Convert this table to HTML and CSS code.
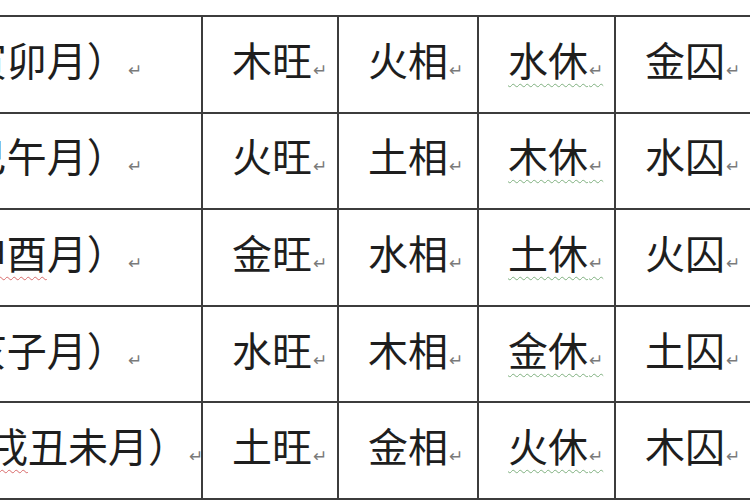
FILE: index.html
```html
<!DOCTYPE html>
<html lang="zh">
<head>
<meta charset="utf-8">
<title>旺相休囚死</title>
<link rel="stylesheet" href="styles.css">
</head>
<body>
<div class="page">
  <table class="wx">
    <colgroup>
      <col class="c-season">
      <col class="c-a">
      <col class="c-b">
      <col class="c-c">
      <col class="c-d">
      <col class="c-e">
    </colgroup>
    <tbody>
      <tr>
        <td class="season">春（寅卯月）<span class="pm">↵</span></td>
        <td>木旺<span class="pm">↵</span></td>
        <td>火相<span class="pm">↵</span></td>
        <td><span class="gram">水休<span class="pm">↵</span></span></td>
        <td>金囚<span class="pm">↵</span></td>
        <td>土死<span class="pm">↵</span></td>
      </tr>
      <tr>
        <td class="season">夏（巳午月）<span class="pm">↵</span></td>
        <td>火旺<span class="pm">↵</span></td>
        <td>土相<span class="pm">↵</span></td>
        <td><span class="gram">木休<span class="pm">↵</span></span></td>
        <td>水囚<span class="pm">↵</span></td>
        <td>金死<span class="pm">↵</span></td>
      </tr>
      <tr>
        <td class="season">秋（<span class="spell">申酉</span>月）<span class="pm">↵</span></td>
        <td>金旺<span class="pm">↵</span></td>
        <td>水相<span class="pm">↵</span></td>
        <td><span class="gram">土休<span class="pm">↵</span></span></td>
        <td>火囚<span class="pm">↵</span></td>
        <td>木死<span class="pm">↵</span></td>
      </tr>
      <tr>
        <td class="season">冬（亥子月）<span class="pm">↵</span></td>
        <td>水旺<span class="pm">↵</span></td>
        <td>木相<span class="pm">↵</span></td>
        <td><span class="gram">金休<span class="pm">↵</span></span></td>
        <td>土囚<span class="pm">↵</span></td>
        <td>火死<span class="pm">↵</span></td>
      </tr>
      <tr>
        <td class="season">四季（<span class="spell">辰戌</span>丑未月）<span class="pm">↵</span></td>
        <td>土旺<span class="pm">↵</span></td>
        <td>金相<span class="pm">↵</span></td>
        <td><span class="gram">火休<span class="pm">↵</span></span></td>
        <td>木囚<span class="pm">↵</span></td>
        <td>水死<span class="pm">↵</span></td>
      </tr>
    </tbody>
  </table>
</div>
</body>
</html>
```

FILE: styles.css
```css
html, body {
  margin: 0;
  padding: 0;
  background: #ffffff;
}

body {
  width: 750px;
  height: 500px;
  overflow: hidden;
  font-family: "Noto Sans CJK SC", "Noto Sans CJK JP", sans-serif;
  color: #1e1e1e;
}

.page {
  padding-top: 15px;
}

.wx {
  margin-left: -174px;
  border-collapse: collapse;
  table-layout: fixed;
  width: 1065px;
}

.c-season { width: 375px; }
.c-a { width: 136px; }
.c-b { width: 140px; }
.c-c { width: 137px; }
.c-d { width: 137px; }
.c-e { width: 140px; }

.wx tr {
  height: 96.6px;
}

.wx td {
  border: 2px solid #3c3c3c;
  padding: 0 0 0 29px;
  font-size: 40px;
  line-height: 48px;
  vertical-align: middle;
  text-align: left;
  white-space: nowrap;
  overflow: hidden;
}

.wx td.season {
  padding: 0;
  text-align: center;
}

.pm {
  font-family: "DejaVu Sans", sans-serif;
  font-size: 17px;
  color: #7a7a7a;
  margin-left: 1px;
}

.gram {
  text-decoration: underline wavy #7fb07f;
  text-decoration-thickness: 1px;
  text-underline-offset: 7px;
}

.spell {
  text-decoration: underline wavy #d86a6a;
  text-decoration-thickness: 1px;
  text-underline-offset: 7px;
}
```
